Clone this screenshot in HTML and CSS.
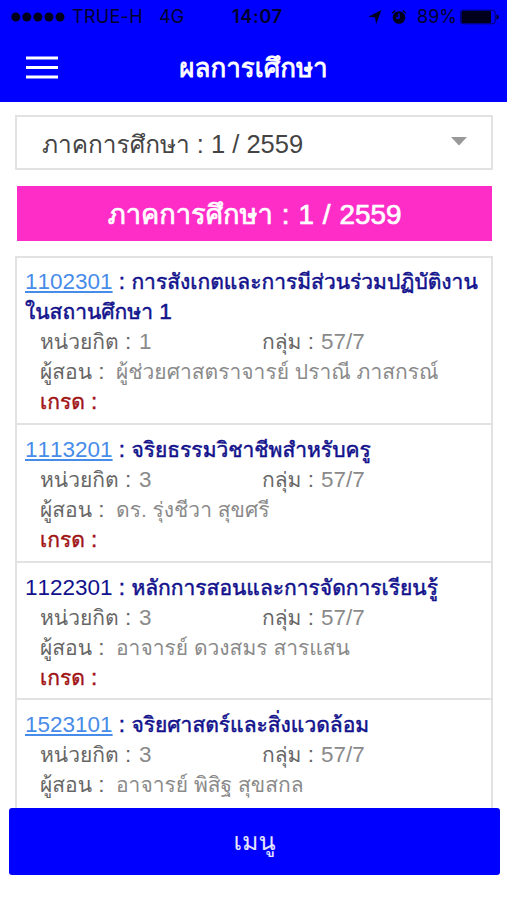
FILE: index.html
```html
<!DOCTYPE html>
<html lang="th">
<head>
<meta charset="utf-8">
<title>ผลการเศึกษา</title>
<link rel="stylesheet" href="styles.css">
</head>
<body>
<div class="screen">
  <header class="header">
    <div class="status">
      <svg class="signal" width="54" height="10" viewBox="0 0 54 10"><circle cx="4.8" cy="5" r="4.5"/><circle cx="15.8" cy="5" r="4.5"/><circle cx="26.9" cy="5" r="4.5"/><circle cx="38" cy="5" r="4.5"/><circle cx="49" cy="5" r="4.5"/></svg>
      <span class="carrier">TRUE-H</span>
      <span class="network">4G</span>
      <span class="clock">14:07</span>
      <svg class="location" width="14" height="14" viewBox="0 0 14 14"><path d="M13.5 0 8.2 14 7 7.4.3 6.8z"/></svg>
      <svg class="alarm" width="16" height="16" viewBox="0 0 16 16"><circle cx="8" cy="8.5" r="6.3"/><path class="ring" d="M1.2 4.3 4.2 1.5M14.8 4.3 11.8 1.5"/><path class="hands" d="M8 4.5V9H5"/></svg>
      <span class="percent">89%</span>
      <svg class="battery" width="39" height="16" viewBox="0 0 39 16"><rect class="case" x=".7" y="1.2" width="34.5" height="13.6" rx="2.4"/><rect x="1.5" y="2" width="29.5" height="12" rx="1"/><path d="M36.5 5.3c3 1 3 4.4 0 5.4z"/></svg>
    </div>
    <div class="navbar">
      <svg class="burger" width="32" height="24" viewBox="0 0 32 24"><path d="M0 2H32M0 11.5H32M0 21H32"/></svg>
      <h1 class="title">ผลการเศึกษา</h1>
    </div>
  </header>
  <main class="content">
    <div class="select"><span><span class="term">ภาคการศึกษา</span> : 1 / 2559</span><svg width="16" height="9" viewBox="0 0 16 9"><path d="M0 0H16L8 8.5z"/></svg></div>
    <h2 class="banner"><span class="term">ภาคการศึกษา</span> : 1 / 2559</h2>
    <section class="list">
      <article class="course">
        <h3 class="name"><a class="code link">1102301</a> : <span class="th">การสังเกตและการมีส่วนร่วมปฏิบัติงาน</span><br><span class="th">ในสถานศึกษา</span> 1</h3>
        <div class="row"><span class="credit"><span class="th">หน่วยกิต</span> :</span><span class="value">1</span><span class="group"><span class="th">กลุ่ม</span> :</span><span class="value">57/7</span></div>
        <div class="row"><span class="teacher"><span class="th">ผู้สอน</span> :</span><span class="value th">ผู้ช่วยศาสตราจารย์ ปราณี ภาสกรณ์</span></div>
        <div class="grade"><span class="th">เกรด</span> :</div>
      </article>
      <article class="course">
        <h3 class="name"><a class="code link">1113201</a> : <span class="th">จริยธรรมวิชาชีพสำหรับครู</span></h3>
        <div class="row"><span class="credit"><span class="th">หน่วยกิต</span> :</span><span class="value">3</span><span class="group"><span class="th">กลุ่ม</span> :</span><span class="value">57/7</span></div>
        <div class="row"><span class="teacher"><span class="th">ผู้สอน</span> :</span><span class="value th">ดร. รุ่งชีวา สุขศรี</span></div>
        <div class="grade"><span class="th">เกรด</span> :</div>
      </article>
      <article class="course">
        <h3 class="name"><span class="code">1122301</span> : <span class="th">หลักการสอนและการจัดการเรียนรู้</span></h3>
        <div class="row"><span class="credit"><span class="th">หน่วยกิต</span> :</span><span class="value">3</span><span class="group"><span class="th">กลุ่ม</span> :</span><span class="value">57/7</span></div>
        <div class="row"><span class="teacher"><span class="th">ผู้สอน</span> :</span><span class="value th">อาจารย์ ดวงสมร สารแสน</span></div>
        <div class="grade"><span class="th">เกรด</span> :</div>
      </article>
      <article class="course">
        <h3 class="name"><a class="code link">1523101</a> : <span class="th">จริยศาสตร์และสิ่งแวดล้อม</span></h3>
        <div class="row"><span class="credit"><span class="th">หน่วยกิต</span> :</span><span class="value">3</span><span class="group"><span class="th">กลุ่ม</span> :</span><span class="value">57/7</span></div>
        <div class="row"><span class="teacher"><span class="th">ผู้สอน</span> :</span><span class="value th">อาจารย์ พิสิฐ สุขสกล</span></div>
      </article>
    </section>
  </main>
  <button class="menu">เมนู</button>
</div>
</body>
</html>
```

FILE: styles.css
```css
* { box-sizing: border-box; }
body { margin: 0; background: #fff; font-family: "Liberation Sans", "Thonburi", "Loma", "Garuda", "Noto Sans Thai Looped", "Waree", "Noto Sans Thai", sans-serif; font-kerning: none; }
h1, h2, h3 { margin: 0; font-weight: normal; }
.screen { width: 507px; height: 900px; overflow: hidden; display: flex; flex-direction: column; }
.header { height: 102px; flex: none; background: #00f; }
.status { height: 34px; display: flex; align-items: center; padding-left: 11px; font: 18px/34px Inter, sans-serif; color: #00002c; white-space: nowrap; }
.status svg { flex: none; fill: #00001c; }
.carrier { width: 88px; padding-left: 7px; letter-spacing: .3px; }
.network { width: 73px; padding-left: 6px; }
.clock { width: 142px; padding-left: 6px; font-weight: 600; letter-spacing: .7px; }
.alarm { margin-left: 9px; }
.ring { stroke: #00001c; stroke-width: 1.5; }
.hands { fill: none; stroke: #00f; stroke-width: 1.4; }
.percent { width: 43px; margin-left: 10px; }
.battery .case { fill: none; stroke: #000060; }
.navbar { height: 68px; display: grid; grid-template-columns: 68px 1fr 68px; align-items: center; }
.burger { margin-left: 26px; stroke: #fff; stroke-width: 3; }
.title { text-align: center; color: #fff; font-size: 26px; line-height: 68px; -webkit-text-stroke: .8px; white-space: nowrap; }
.content { flex: 1; min-height: 0; padding: 13px 14px 0 15px; overflow: hidden; }
.select { height: 55px; border: 2px solid #e2e2e2; display: flex; justify-content: space-between; align-items: center; padding: 3px 24px 0 25px; font-size: 25.5px; color: #444; white-space: nowrap; }
.select .term { font-size: 24.4px; }
.select svg { fill: #999; margin-top: -6px; }
.banner { height: 55px; margin: 16px 1px 15px 2px; background: #ff2dc8; color: #fff; font-size: 27.8px; line-height: 57px; text-align: center; word-spacing: 1.2px; -webkit-text-stroke: .7px; white-space: nowrap; }
.banner .term { font-size: 27.3px; }
.list { border: 2px solid #e2e2e2; border-bottom: 0; }
.course { height: 137.7px; padding: 10px 0 0 8px; border-bottom: 2px solid #e2e2e2; font-size: 22.5px; line-height: 30px; white-space: nowrap; }
.course:first-child { height: 167px; padding-top: 9px; }
.name { font-size: 22.5px; line-height: 30px; color: #11118c; -webkit-text-stroke: .5px; }
.th { font-size: 21px; }
.code { -webkit-text-stroke: 0; }
.link { color: #478ce8; text-decoration: underline; text-decoration-thickness: 2px; text-underline-offset: 2px; text-decoration-skip-ink: none; }
.row { height: 30px; display: flex; padding-left: 15px; color: #666; }
.value { color: #8a8a8a; }
.credit { width: 99px; }
.credit + .value { width: 123px; }
.group { width: 59px; }
.teacher { width: 76px; }
.grade { padding-left: 15px; height: 30px; color: #a01414; -webkit-text-stroke: .4px; }
.menu { flex: none; width: 491px; height: 67px; margin: 0 0 25px 9px; padding: 0; border: 0; border-radius: 3px; background: #00f; color: #e4e4ff; font-family: inherit; font-size: 25px; line-height: 67px; }
```
